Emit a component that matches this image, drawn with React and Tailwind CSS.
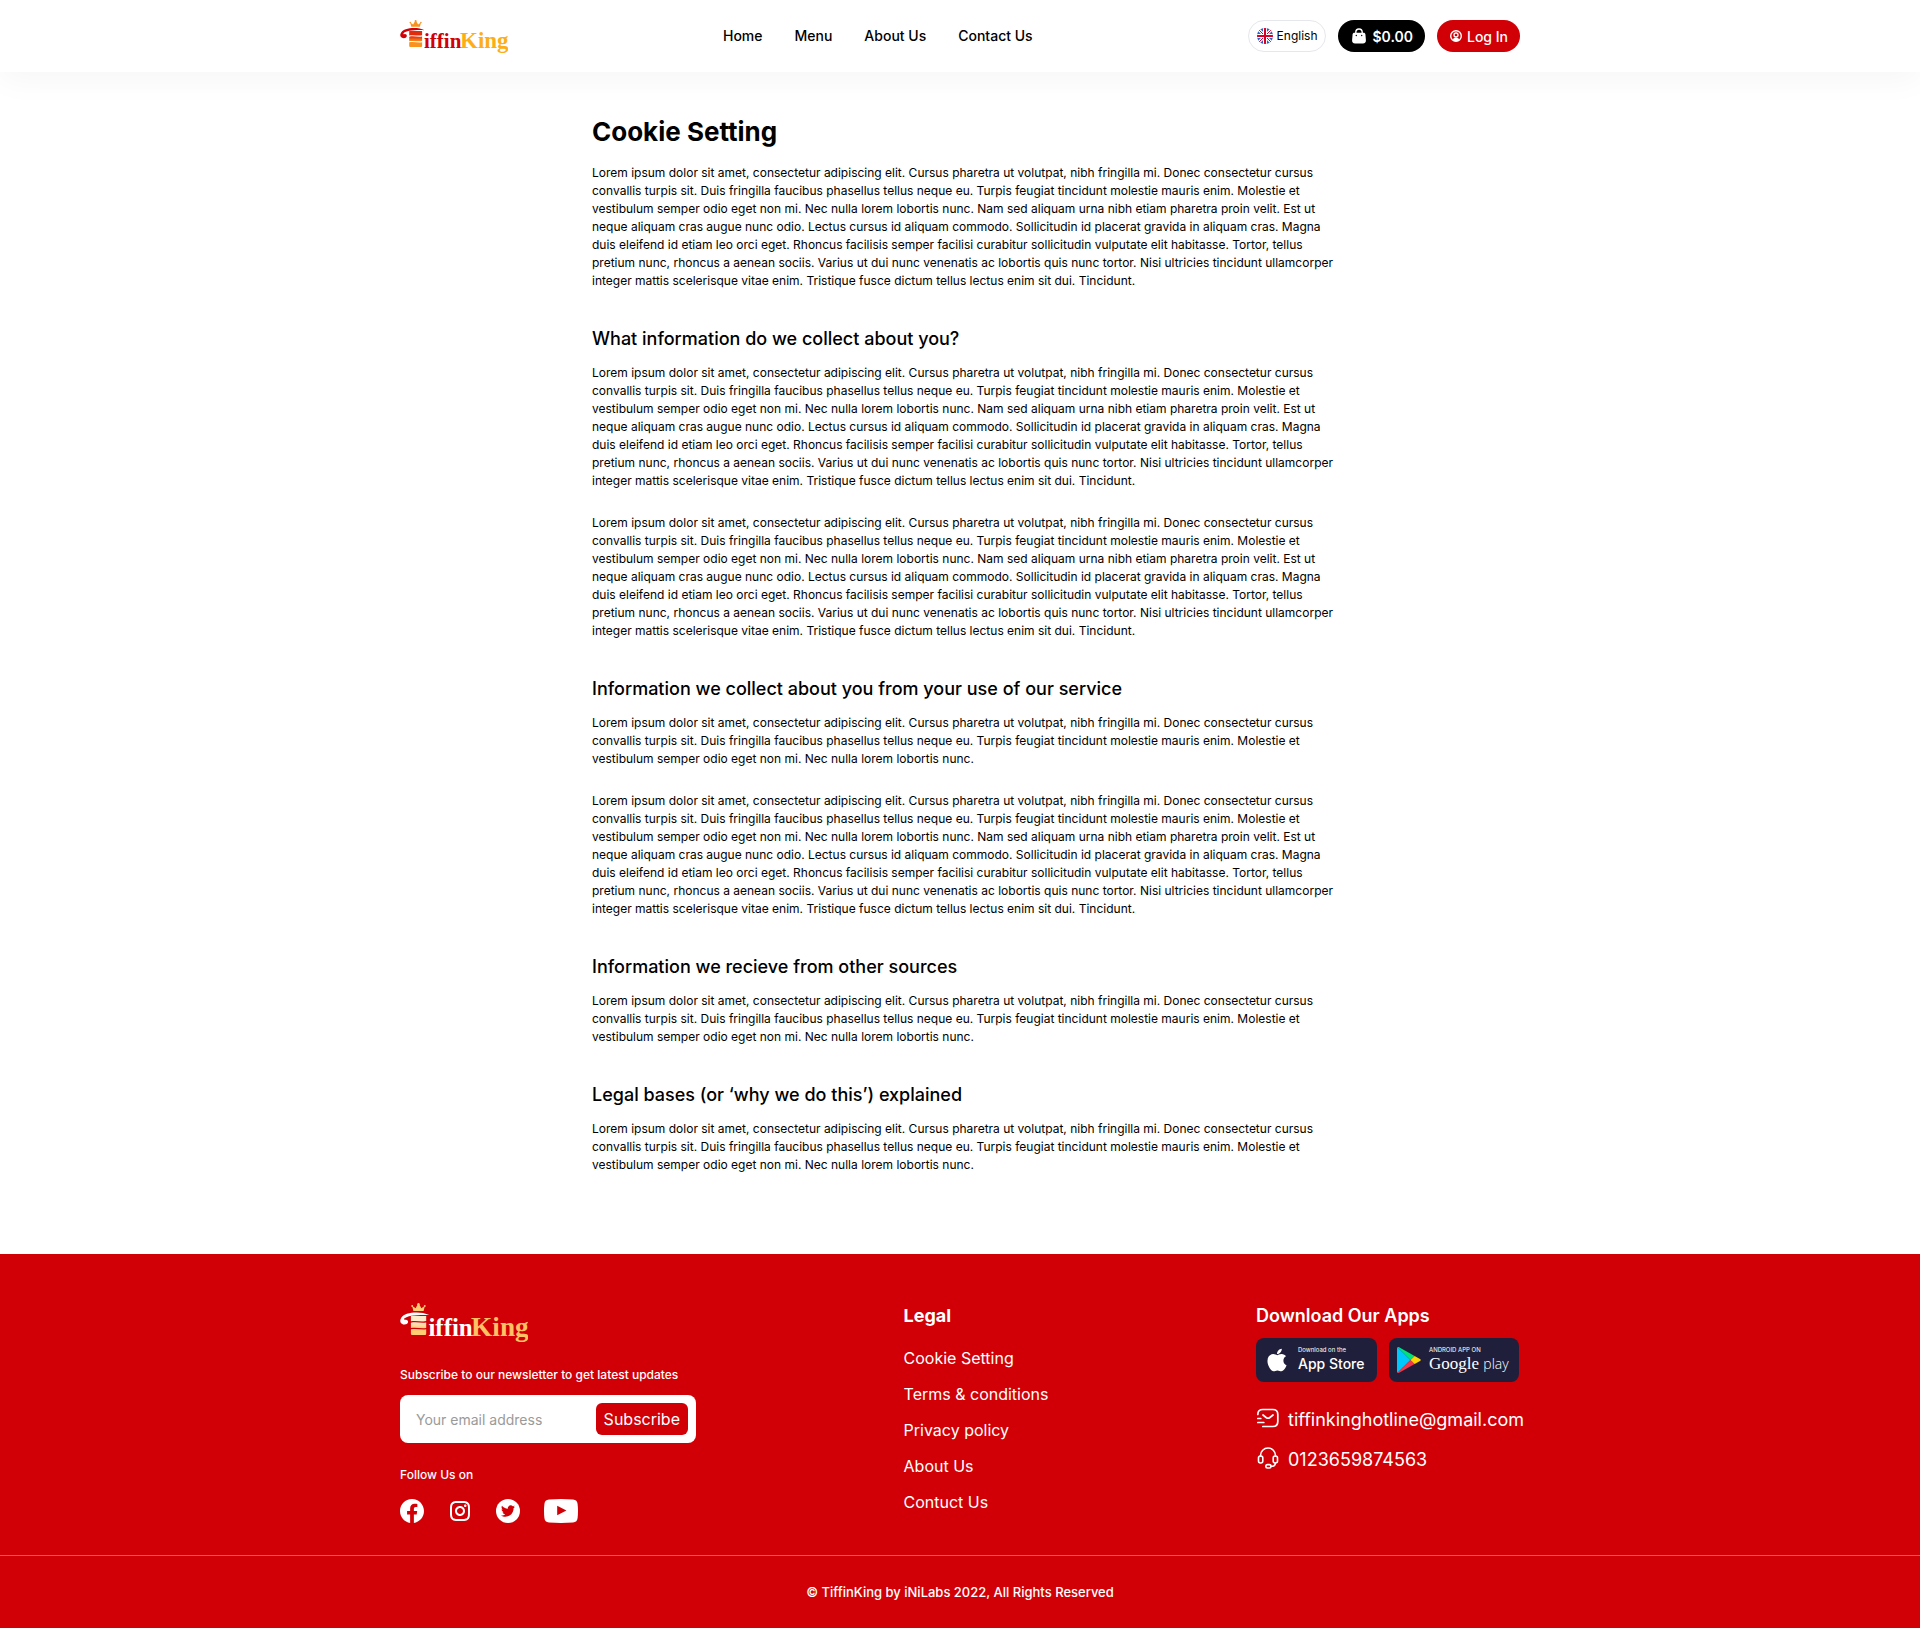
import React from "react";
import { BsFacebook } from "react-icons/bs";
import { RiInstagramLine } from "react-icons/ri";
import { FaTwitter, FaApple } from "react-icons/fa";

const SHORT =
  "Lorem ipsum dolor sit amet, consectetur adipiscing elit. Cursus pharetra ut volutpat, nibh fringilla mi. Donec consectetur cursus convallis turpis sit. Duis fringilla faucibus phasellus tellus neque eu. Turpis feugiat tincidunt molestie mauris enim. Molestie et vestibulum semper odio eget non mi. Nec nulla lorem lobortis nunc.";
const LONG =
  SHORT +
  " Nam sed aliquam urna nibh etiam pharetra proin velit. Est ut neque aliquam cras augue nunc odio. Lectus cursus id aliquam commodo. Sollicitudin id placerat gravida in aliquam cras. Magna duis eleifend id etiam leo orci eget. Rhoncus facilisis semper facilisi curabitur sollicitudin vulputate elit habitasse. Tortor, tellus pretium nunc, rhoncus a aenean sociis. Varius ut dui nunc venenatis ac lobortis quis nunc tortor. Nisi ultricies tincidunt ullamcorper integer mattis scelerisque vitae enim. Tristique fusce dictum tellus lectus enim sit dui. Tincidunt.";

const SECTIONS = [
  { title: "What information do we collect about you?", paragraphs: [LONG, LONG] },
  { title: "Information we collect about you from your use of our service", paragraphs: [SHORT, LONG] },
  { title: "Information we recieve from other sources", paragraphs: [SHORT] },
  { title: "Legal bases (or ‘why we do this’) explained", paragraphs: [SHORT] },
];

function Logo({ id, className, top, bottom, word, king }) {
  return (
    <svg viewBox="0 0 108 33" className={className} role="img" aria-label="TiffinKing">
      <defs>
        <linearGradient id={id} x1="0" y1="0" x2="0" y2="1">
          <stop offset="0" stopColor={top} />
          <stop offset="1" stopColor={bottom} />
        </linearGradient>
      </defs>
      <path d="M11.3 6.8 10.2 2.4l2.9 2.1L15.6.2l2.5 4.3L21 2.4l-1.1 4.4Z" fill={bottom} />
      <circle cx="15.6" cy="1" r="1" fill={bottom} />
      <circle cx="10.3" cy="2.6" r=".8" fill={bottom} />
      <circle cx="20.9" cy="2.6" r=".8" fill={bottom} />
      <path
        d="M24.6 10.2C19 7.4 11 7.6 5.8 9.2 1.6 10.600 0 13.600.3 15.800c.5 2.800 5.800 3.400 6.500.5.300-1.700-1.200-2.500-2.500-2.100-.9.200-1.200-.5-.5-1.200C6 10.800 14 9.800 24.600 10.200Z"
        fill={word}
      />
      <g fill={`url(#${id})`}>
        <path d="M9.200 11h12.900v4.300c-4 1-8-.9-12.900.2Z" fill={top} />
        <path d="M9.200 16.700c5-1 9 .7 12.900-.2v4.600c-4 .9-8-.8-12.900.1Z" />
        <path d="M9.200 22.300c5-.8 9 .6 12.900-.1v3.800q0 1-1 1H10.200q-1 0-1-1Z" fill={bottom} />
      </g>
      <text x="24" y="28" fontFamily="'Liberation Serif', serif" fontWeight="700" fontSize="21" fill={word}>
        iffin
      </text>
      <text x="60" y="28" fontFamily="'Liberation Serif', serif" fontWeight="700" fontSize="23" fill={king}>
        King
      </text>
    </svg>
  );
}

function Flag() {
  return (
    <svg viewBox="0 0 16 16" className="size-4 shrink-0" aria-hidden="true">
      <clipPath id="flag-round">
        <circle cx="8" cy="8" r="8" />
      </clipPath>
      <g clipPath="url(#flag-round)">
        <rect width="16" height="16" fill="#2f62c9" />
        <path d="M1 1l14 14M15 1 1 15" stroke="#fff" strokeWidth="3" />
        <path d="M1 1l14 14M15 1 1 15" stroke="#d80027" strokeWidth="1" />
        <path d="M8 0v16M0 8h16" stroke="#fff" strokeWidth="4" />
        <path d="M8 0v16M0 8h16" stroke="#d80027" strokeWidth="2" />
      </g>
    </svg>
  );
}

function BagIcon() {
  return (
    <svg viewBox="0 0 18 18" className="size-[18px] shrink-0" aria-hidden="true">
      <path d="M5.800 7V5.200a3.200 3.200 0 0 1 6.400 0V7" fill="none" stroke="#fff" strokeWidth="1.400" />
      <path d="M4.400 5.700h9.200c1 0 1.700.6 1.800 1.600l.5 5.700c.2 2.200-.9 3.500-3 3.500H5.100c-2.100 0-3.200-1.300-3-3.500l.5-5.700c.1-1 .8-1.600 1.800-1.600Z" fill="#fff" />
      <circle cx="6.300" cy="8.500" r=".7" fill="#000" />
      <circle cx="11.700" cy="8.500" r=".7" fill="#000" />
    </svg>
  );
}

function UserIcon() {
  return (
    <svg viewBox="0 0 14 14" className="size-3.5 shrink-0" fill="none" stroke="#fff" aria-hidden="true">
      <circle cx="7" cy="7" r="5.300" strokeWidth="1.400" />
      <circle cx="7" cy="6" r="2" strokeWidth="1.300" />
      <path d="M3.500 10.700c.8-1.300 2-1.900 3.500-1.900s2.700.6 3.500 1.900C9.500 11.700 8.300 12.200 7 12.200s-2.500-.5-3.500-1.500Z" fill="#fff" stroke="none" />
    </svg>
  );
}

function PlayIcon() {
  return (
    <svg viewBox="0 0 24 26" className="h-[26px] w-6 shrink-0" aria-hidden="true">
      <path d="M.6.300C.2.600 0 1 0 1.600v22.800c0 .6.200 1 .6 1.300L13.500 13Z" fill="#00c8fa" />
      <path d="M.6.300C1 0 1.500 0 2.100.3l15.500 8.700-4.100 4Z" fill="#00e377" />
      <path d="M.6 25.700c.4.300.9.300 1.500 0L17.600 17l-4.100-4Z" fill="#f0384a" />
      <path d="m17.600 9 5.400 3c1 .6 1 1.400 0 2l-5.400 3-4.100-4Z" fill="#ffd500" />
    </svg>
  );
}

function MailIcon() {
  return (
    <svg viewBox="0 0 24 24" className="size-6 shrink-0" fill="none" stroke="#fff" strokeWidth="1.700" strokeLinecap="round" strokeLinejoin="round" aria-hidden="true">
      <path d="M1.800 8.500c0-3.400 1.700-5 5-5h10c3.400 0 5 1.600 5 5v7c0 3.400-1.600 5-5 5h-10" />
      <path d="m17 9-3.100 2.500c-1 .8-2.700.8-3.800 0L7 9" />
      <path d="M1.800 16.500h6M1.800 12.500h3" />
    </svg>
  );
}

function HeadsetIcon() {
  return (
    <svg viewBox="0 0 24 24" className="size-6 shrink-0" fill="none" stroke="#fff" strokeWidth="1.600" strokeLinecap="round" strokeLinejoin="round" aria-hidden="true">
      <path d="M4.500 10V9.500a7.500 7.500 0 0 1 15 0v.5" />
      <path d="M6.800 12v3c0 1.200-.8 2-2 2h-.3c-1.200 0-2-.8-2-2v-3c0-1.200.8-2 2-2h.3c1.200 0 2 .8 2 2ZM21.500 12v3c0 1.200-.8 2-2 2h-.3c-1.200 0-2-.8-2-2v-3c0-1.200.8-2 2-2h.3c1.200 0 2 .8 2 2Z" />
      <path d="M19.300 17.200c0 1.900-1.500 3.100-4.300 3.100" />
      <rect x="9.800" y="18.600" width="5.200" height="3.400" rx="1.700" />
    </svg>
  );
}

function Header() {
  return (
    <header className="bg-white shadow-[0_8px_32px_rgba(0,0,0,0.04)]">
      <div className="mx-auto flex min-h-[72px] max-w-[1120px] flex-wrap items-center justify-between gap-4 lg:flex-nowrap">
        <a href="#home">
          <Logo id="logo-head" className="h-[33px] w-[108px]" top="#e02b0c" bottom="#f9921c" word="#d10006" king="#fdae17" />
        </a>
        <nav className="flex gap-8 text-[14px] leading-5 font-medium text-black">
          <a href="#home">Home</a>
          <a href="#menu">Menu</a>
          <a href="#about">About Us</a>
          <a href="#contact">Contact Us</a>
        </nav>
        <div className="flex items-center gap-3">
          <button type="button" className="flex h-8 items-center gap-1 rounded-full border border-gray-200 px-2 text-[12px] text-black">
            <Flag />
            English
          </button>
          <button type="button" className="flex h-8 items-center gap-1 rounded-full bg-black px-3 text-[14px] font-semibold text-white">
            <BagIcon />
            $0.00
          </button>
          <a href="#login" className="flex h-8 items-center gap-1 rounded-full bg-[#d10006] px-3 text-[14px] font-medium text-white">
            <UserIcon />
            Log In
          </a>
        </div>
      </div>
    </header>
  );
}

function Paragraphs({ items }) {
  return (
    <div className="space-y-6 text-[12px] leading-[18px] xl:-mr-3">
      {items.map((text, i) => (
        <p key={i}>{text}</p>
      ))}
    </div>
  );
}

function Footer() {
  return (
    <footer className="bg-[#d10006] text-white">
      <div className="mx-auto flex max-w-[1120px] flex-wrap justify-between gap-8 pt-12 pb-8">
        <div className="w-[296px]">
          <Logo id="logo-foot" className="mb-6 h-[41px] w-[128px]" top="#ffeccb" bottom="#ffcb73" word="#ffffff" king="#ffc164" />
          <form onSubmit={(e) => e.preventDefault()}>
            <label htmlFor="newsletter" className="mb-3 block text-[12px] leading-4 font-medium whitespace-nowrap">
              Subscribe to our newsletter to get latest updates
            </label>
            <div className="flex h-12 items-center rounded-lg bg-white p-2">
              <input id="newsletter" type="email" placeholder="Your email address" className="min-w-0 flex-1 px-2 text-[14px] text-black outline-none placeholder:text-[#9a9a9a]" />
              <button type="submit" className="h-8 rounded-md bg-[#d10006] px-2 text-[16px]">
                Subscribe
              </button>
            </div>
          </form>
          <p className="mt-6 text-[12px] leading-4 font-medium">Follow Us on</p>
          <div className="mt-4 flex items-center gap-6">
            <a href="#facebook" aria-label="Facebook">
              <BsFacebook className="size-6" />
            </a>
            <a href="#instagram" aria-label="Instagram">
              <RiInstagramLine className="size-6" />
            </a>
            <a href="#twitter" aria-label="Twitter" className="grid size-6 place-items-center rounded-full bg-white text-[#d10006]">
              <FaTwitter className="size-3.5" />
            </a>
            <a href="#youtube" aria-label="YouTube">
              <svg viewBox="0 0 34 24" className="h-6 w-[34px]" aria-hidden="true">
                <path d="M5 .5Q17-.4 29 .5q4.300.3 4.600 4.500.8 7 0 14-.3 4.200-4.600 4.500-12 .9-24 0Q.7 23.200.4 19q-.8-7 0-14Q.7.800 5 .5Z" fill="#fff" />
                <path d="M13.200 6.800v9.400l9.200-4.700Z" fill="#d10006" />
              </svg>
            </a>
          </div>
        </div>

        <div>
          <h2 className="mb-4 text-[18px] leading-7 font-bold">Legal</h2>
          <ul className="space-y-3 text-[16px] leading-6">
            <li><a href="#cookie">Cookie Setting</a></li>
            <li><a href="#terms">Terms &amp; conditions</a></li>
            <li><a href="#privacy">Privacy policy</a></li>
            <li><a href="#about">About Us</a></li>
            <li><a href="#contact">Contuct Us</a></li>
          </ul>
        </div>

        <div className="w-[264px]">
          <h2 className="mb-2 text-[18px] leading-7 font-semibold">Download Our Apps</h2>
          <div className="mb-6 flex gap-3">
            <a href="#appstore" className="flex h-11 w-[121px] items-center gap-2 rounded-lg bg-[#201f3b] pl-2">
              <FaApple className="size-[26px] shrink-0" />
              <span className="flex flex-col whitespace-nowrap">
                <span className="text-[6px] leading-2">Download on the</span>
                <span className="text-[14px] leading-5 font-medium">App Store</span>
              </span>
            </a>
            <a href="#googleplay" className="flex h-11 w-[130px] items-center gap-2 rounded-lg bg-[#201f3b] pl-2">
              <PlayIcon />
              <span className="flex flex-col whitespace-nowrap">
                <span className="text-[6px] leading-2">ANDROID APP ON</span>
                <span className="font-['Liberation_Serif',serif] text-[17px] leading-5">
                  Google <span className="font-['Open_Sans',sans-serif] text-[14px] font-light">play</span>
                </span>
              </span>
            </a>
          </div>
          <ul className="space-y-3 text-[18px] leading-7 whitespace-nowrap">
            <li className="flex items-start gap-2">
              <MailIcon />
              <a href="mailto:tiffinkinghotline@gmail.com">tiffinkinghotline@gmail.com</a>
            </li>
            <li className="flex items-start gap-2">
              <HeadsetIcon />
              <a href="tel:0123659874563">0123659874563</a>
            </li>
          </ul>
        </div>
      </div>
      <div className="border-t border-white/35 py-6 text-center text-[13px] leading-6 font-medium">
        © TiffinKing by iNiLabs 2022, All Rights Reserved
      </div>
    </footer>
  );
}

export default function App() {
  return (
    <div className="bg-white font-['Inter',sans-serif] text-black">
      <Header />
      <main className="mx-auto max-w-[736px] pt-10 pb-20">
        <h1 className="mb-3 text-[26px] leading-10 font-bold">Cookie Setting</h1>
        <Paragraphs items={[LONG]} />
        {SECTIONS.map((s) => (
          <section key={s.title}>
            <h2 className="mt-9 mb-3 text-[18px] leading-[26px] font-medium">{s.title}</h2>
            <Paragraphs items={s.paragraphs} />
          </section>
        ))}
      </main>
      <Footer />
    </div>
  );
}
